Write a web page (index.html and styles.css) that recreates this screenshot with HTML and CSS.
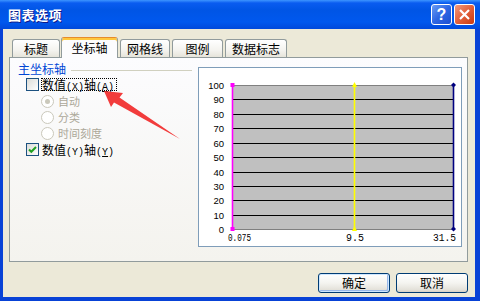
FILE: index.html
```html
<!DOCTYPE html>
<html lang="zh-CN">
<head>
    <meta charset="UTF-8">
    <title>图表选项</title>
    <link rel="stylesheet" href="styles.css">
</head>
<body>
<div class="window">
    <div class="titlebar">
        <span class="title">图表选项</span>
        <div class="caption_buttons">
            <span class="caption_btn help_btn">?</span>
            <span class="caption_btn close_btn">
                <svg width="19" height="19" viewBox="0 0 19 19">
                    <path d="M5 5 L14 14 M14 5 L5 14" stroke="#ffffff" stroke-width="2.2"/>
                </svg>
            </span>
        </div>
    </div>

    <div class="frame">
        <div class="client">
            <div class="tabs">
                <div class="tab tab_title">标题</div>
                <div class="tab tab_axis active">坐标轴</div>
                <div class="tab tab_grid">网格线</div>
                <div class="tab tab_legend">图例</div>
                <div class="tab tab_labels">数据标志</div>
            </div>

            <div class="panel">
                <div class="options">
                    <div class="group_title"><span class="option_text">主坐标轴</span><span class="rule"></span></div>

                    <div class="option_row check_row">
                        <span class="checkbox"></span>
                        <span class="check_label focused">数值<span class="en">(X)</span>轴<span class="en">(<u>A</u>)</span></span>
                    </div>
                    <div class="option_row radio_row disabled">
                        <span class="radio checked"></span><span class="option_text">自动</span>
                    </div>
                    <div class="option_row radio_row disabled">
                        <span class="radio"></span><span class="option_text">分类</span>
                    </div>
                    <div class="option_row radio_row disabled">
                        <span class="radio"></span><span class="option_text">时间刻度</span>
                    </div>
                    <div class="option_row check_row last_row">
                        <span class="checkbox">
                            <svg width="11" height="11" viewBox="0 0 11 11">
                                <path d="M2 5.5 L4.3 7.8 L9 3" fill="none" stroke="#21a121" stroke-width="2"/>
                            </svg>
                        </span>
                        <span class="check_label">数值<span class="en">(Y)</span>轴<span class="en">(<u>Y</u>)</span></span>
                    </div>
                </div>

                <div class="preview">
                    <svg width="262" height="178" viewBox="0 0 262 178">
                        <rect x="33" y="17" width="221" height="144" fill="#c0c0c0"/>
                        <g stroke="#000000" stroke-width="1" shape-rendering="crispEdges">
                            <line x1="33" y1="31.5" x2="254" y2="31.5"/>
                            <line x1="33" y1="46.5" x2="254" y2="46.5"/>
                            <line x1="33" y1="60.5" x2="254" y2="60.5"/>
                            <line x1="33" y1="75.5" x2="254" y2="75.5"/>
                            <line x1="33" y1="89.5" x2="254" y2="89.5"/>
                            <line x1="33" y1="104.5" x2="254" y2="104.5"/>
                            <line x1="33" y1="118.5" x2="254" y2="118.5"/>
                            <line x1="33" y1="132.5" x2="254" y2="132.5"/>
                            <line x1="33" y1="147.5" x2="254" y2="147.5"/>
                        </g>
                        <g stroke="#808080" stroke-width="1" shape-rendering="crispEdges">
                            <line x1="33" y1="17.5" x2="255" y2="17.5"/>
                            <line x1="33" y1="161.5" x2="255" y2="161.5"/>
                        </g>

                        <g class="y_labels" text-anchor="end">
                            <text x="25" y="21">100</text>
                            <text x="25" y="35">90</text>
                            <text x="25" y="50">80</text>
                            <text x="25" y="64">70</text>
                            <text x="25" y="79">60</text>
                            <text x="25" y="93">50</text>
                            <text x="25" y="108">40</text>
                            <text x="25" y="122">30</text>
                            <text x="25" y="136">20</text>
                            <text x="25" y="151">10</text>
                            <text x="25" y="165">0</text>
                        </g>

                        <!-- series lines -->
                        <line x1="33.5" y1="17" x2="33.5" y2="161" stroke="#ff00ff" stroke-width="1.6"/>
                        <line x1="155.5" y1="17" x2="155.5" y2="161" stroke="#ffff00" stroke-width="1.6"/>
                        <line x1="254.5" y1="17" x2="254.5" y2="161" stroke="#000080" stroke-width="1.6"/>

                        <rect x="31.5" y="15" width="4" height="4" fill="#ff00ff"/>
                        <rect x="31.5" y="159" width="4" height="4" fill="#ff00ff"/>
                        <polygon points="155.5,14 153,19 158,19" fill="#ffff00"/>
                        <polygon points="155.5,158 153,163 158,163" fill="#ffff00"/>
                        <polygon points="254.5,14.5 257,17 254.5,19.5 252,17" fill="#000080"/>
                        <polygon points="254.5,158.5 257,161 254.5,163.5 252,161" fill="#000080"/>

                        <g class="x_labels">
                            <text x="29" y="173" textLength="23" lengthAdjust="spacingAndGlyphs">0.075</text>
                            <text x="147" y="173" textLength="18" lengthAdjust="spacingAndGlyphs">9.5</text>
                            <text x="234" y="173" textLength="23" lengthAdjust="spacingAndGlyphs">31.5</text>
                        </g>
                    </svg>
                </div>
            </div>

            <div class="dialog_buttons">
                <button class="xp_button default_button">确定</button>
                <button class="xp_button">取消</button>
            </div>
        </div>
    </div>

    <!-- red annotation arrow over the dialog -->
    <svg class="annotation" width="480" height="301" viewBox="0 0 480 301">
        <polygon points="104,91 123,93 119.5,97.5 180,139 114,102.5 111,107" fill="#f23c3c"/>
    </svg>
</div>
</body>
</html>
```

FILE: styles.css
```css
body {
    margin: 0;
    font-family: "Noto Sans CJK SC", sans-serif;
    font-size: 12px;
    color: #000000;
}

.window {
    position: relative;
    width: 480px;
    height: 301px;
    display: flex;
    flex-direction: column;
    background: #0842d6;
}

.titlebar {
    height: 29px;
    flex: none;
    box-sizing: border-box;
    display: flex;
    align-items: center;
    justify-content: space-between;
    padding: 0 5px 0 8px;
    background: linear-gradient(#3d95ff 0, #0a5cf0 3px, #0055e5 10px, #0058ee 22px, #0049db 29px);
}

.title {
    color: #ffffff;
    font-weight: bold;
    font-size: 13px;
    letter-spacing: 0.5px;
    line-height: 15px;
    text-shadow: 1px 1px 0 #0f1a89;
}

.caption_buttons {
    display: flex;
    gap: 2px;
}

.caption_btn {
    width: 21px;
    height: 21px;
    box-sizing: border-box;
    border: 1px solid #ffffff;
    border-radius: 3px;
    display: flex;
    align-items: center;
    justify-content: center;
}

.help_btn {
    background: linear-gradient(135deg, #6a9cf4, #2d66e3 50%, #1c4fd2);
    color: #ffffff;
    font-family: "Liberation Sans", sans-serif;
    font-weight: bold;
    font-size: 16px;
    line-height: 19px;
}

.close_btn {
    background: linear-gradient(135deg, #f29a7c, #e2603a 50%, #c8390f);
}

.frame {
    flex: 1;
    display: flex;
    padding: 0 5px 4px 3px;
}

.client {
    flex: 1;
    display: flex;
    flex-direction: column;
    background: #ece9d8;
    padding: 8px 7px 4px 6px;
}

/* tabs */

.tabs {
    height: 20px;
    display: flex;
    align-items: flex-end;
    gap: 2px;
    padding-left: 3px;
}

.tab {
    height: 18px;
    box-sizing: border-box;
    border: 1px solid #919b9c;
    border-bottom: 0;
    border-radius: 3px 3px 0 0;
    background: linear-gradient(#ffffff, #f4f3ef 60%, #e6e4da);
    display: flex;
    align-items: center;
    justify-content: center;
    line-height: 14px;
}

.tab_title { width: 48px; }
.tab_axis { width: 57px; }
.tab_grid { width: 50px; }
.tab_legend { width: 51px; }
.tab_labels { width: 62px; }

.tab.active {
    height: 21px;
    margin-bottom: -1px;
    margin-left: -1px;
    position: relative;
    z-index: 1;
    background: #fcfcfe;
    border-top: 1px solid #e68b2c;
    box-shadow: inset 0 2px 0 #ffc73c;
    padding-bottom: 1px;
}

.panel {
    height: 205px;
    box-sizing: border-box;
    border: 1px solid #919b9c;
    background: linear-gradient(#fcfcfe, #f4f3ee);
    display: flex;
    align-items: flex-start;
    padding: 3px 5px 0 8px;
}

/* options column */

.options {
    width: 174px;
    display: flex;
    flex-direction: column;
}

.group_title {
    height: 15px;
    display: flex;
    align-items: center;
    gap: 5px;
    color: #0046d5;
}

.group_title .rule {
    flex: 1;
    height: 1px;
    margin-top: 3px;
    background: #d0d0bf;
}

.option_text {
    display: inline-block;
    height: 12px;
    line-height: 12px;
}

.option_row {
    display: flex;
    align-items: center;
}

.check_row {
    height: 17px;
    padding-left: 8px;
}

.check_row.last_row {
    height: 14px;
    margin-top: 1px;
}

.radio_row {
    height: 16px;
    padding-left: 23px;
    font-size: 11px;
}

.disabled {
    color: #aca899;
}

.checkbox {
    width: 13px;
    height: 13px;
    flex: none;
    box-sizing: border-box;
    border: 1px solid #1c5180;
    background: linear-gradient(135deg, #dcdcd7, #ffffff);
    margin-right: 2px;
    display: flex;
    align-items: center;
    justify-content: center;
}

.check_label {
    display: inline-block;
    height: 11px;
    border: 1px dotted transparent;
    padding-right: 2px;
    line-height: 11px;
}

.check_label.focused {
    border-color: #000000;
}

.en {
    font-family: "Liberation Mono", monospace;
    font-size: 10px;
}

.radio {
    width: 13px;
    height: 13px;
    flex: none;
    box-sizing: border-box;
    border: 1px solid #cac8bb;
    border-radius: 50%;
    background: #ffffff;
    margin-right: 4px;
    display: flex;
    align-items: center;
    justify-content: center;
}

.radio.checked::after {
    content: "";
    width: 5px;
    height: 5px;
    border-radius: 50%;
    background: #cac8bb;
}

/* chart preview */

.preview {
    width: 264px;
    height: 180px;
    box-sizing: border-box;
    margin: 6px 0 0 6px;
    border: 1px solid #7f9db9;
    background: #ffffff;
}

.preview svg {
    display: block;
}

.y_labels {
    font-family: "Liberation Sans", sans-serif;
    font-size: 9.5px;
    fill: #000000;
}

.x_labels {
    font-family: "Liberation Mono", monospace;
    font-size: 10px;
    fill: #000000;
}

/* bottom buttons */

.dialog_buttons {
    margin-top: 11px;
    display: flex;
    justify-content: flex-end;
    gap: 6px;
}

.xp_button {
    width: 72px;
    height: 20px;
    box-sizing: border-box;
    padding: 0;
    border: 1px solid #003c74;
    border-radius: 3px;
    background: linear-gradient(#ffffff, #f4f4f0 50%, #e3e1d9 88%, #d6d0c5);
    font-family: "Noto Sans CJK SC", sans-serif;
    font-size: 12px;
    line-height: 16px;
    color: #000000;
}

.default_button {
    box-shadow: inset 0 0 0 1px #cee7ff, inset -1px -1px 0 1px #98b8ea;
}

.annotation {
    position: absolute;
    left: 0;
    top: 0;
    pointer-events: none;
}
```
